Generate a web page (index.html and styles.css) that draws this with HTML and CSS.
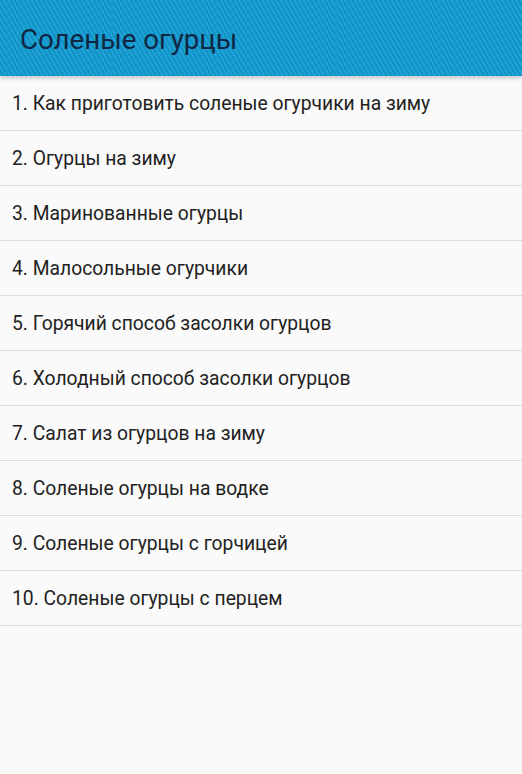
FILE: index.html
```html
<!DOCTYPE html>
<html lang="ru">
<head>
  <meta charset="UTF-8" />
  <meta name="viewport" content="width=device-width, initial-scale=1.0" />
  <title>Соленые огурцы</title>
  <link rel="stylesheet" href="styles.css">
</head>
<body>
  <div class="header">
    <span class="title">Соленые огурцы</span>
  </div>

  <ul class="list">
    <li class="item">1. Как приготовить соленые огурчики на зиму</li>
    <li class="item">2. Огурцы на зиму</li>
    <li class="item">3. Маринованные огурцы</li>
    <li class="item">4. Малосольные огурчики</li>
    <li class="item">5. Горячий способ засолки огурцов</li>
    <li class="item">6. Холодный способ засолки огурцов</li>
    <li class="item">7. Салат из огурцов на зиму</li>
    <li class="item">8. Соленые огурцы на водке</li>
    <li class="item">9. Соленые огурцы с горчицей</li>
    <li class="item">10. Соленые огурцы с перцем</li>
  </ul>
</body>
</html>
```

FILE: styles.css
```css
body {
  margin: 0;
  background-color: #fafafa;
  font-family: Roboto, 'Noto Sans', sans-serif;
  height: 774px;
  overflow: hidden;
}

.header {
  height: 76px;
  display: flex;
  align-items: center;
  padding-left: 20px;
  background-color: #1b9fd3;
  background-image: repeating-linear-gradient(
    60deg,
    #1ca2d6 0px,
    #1ca2d6 2px,
    #1592c4 2px,
    #1592c4 4px
  );
  box-shadow: 0 2px 5px rgba(0, 0, 0, 0.22);
  position: relative;
  z-index: 1;
}

.title {
  font-size: 27.7px;
  color: #0f2742;
  margin-top: 2px;
}

.list {
  list-style: none;
  margin: 0;
  padding: 0;
}

.item {
  height: 54px;
  display: flex;
  align-items: center;
  padding-left: 12px;
  font-size: 19.3px;
  color: #222;
  border-bottom: 1px solid #dcdcdc;
}
```
